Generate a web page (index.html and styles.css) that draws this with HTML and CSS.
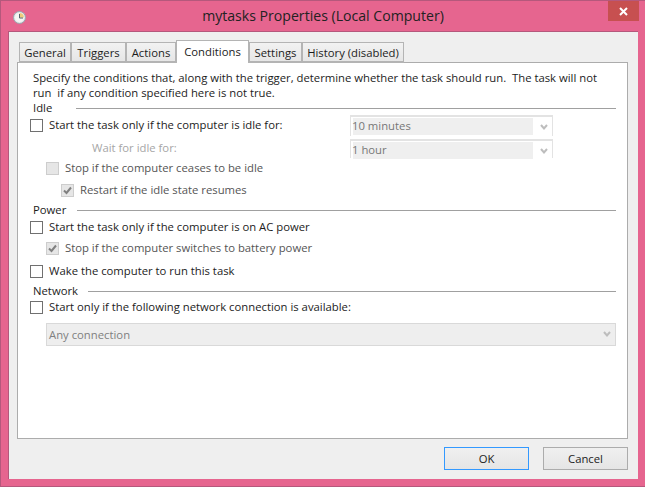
FILE: index.html
```html
<!DOCTYPE html>
<html lang="en">
<head>
<meta charset="utf-8">
<title>mytasks Properties (Local Computer)</title>
<link rel="stylesheet" href="styles.css">
</head>
<body>
<div class="window">
  <header class="titlebar">
    <svg class="app-icon" width="13" height="13" viewBox="0 0 13 13"><circle cx="6.5" cy="6.5" r="6" fill="#e4e8ea" stroke="#9aa5ad"/><circle cx="6.5" cy="6.5" r="4.5" fill="#f6f6f4"/><path d="M6.5 6.5V2A4.5 4.5 0 0 1 11 6.5Z" fill="#efcb7c"/><path d="M6.5 3V7H10" fill="none" stroke="#56626c"/></svg>
    <h1 class="title">mytasks Properties (Local Computer)</h1>
    <div class="close"><svg width="9" height="9" viewBox="0 0 9 9"><path d="M1 1L8 8M8 1L1 8" stroke="#fff" stroke-width="2"/></svg></div>
  </header>
  <div class="client">
    <nav class="tabs">
      <div class="tab t-general">General</div>
      <div class="tab t-triggers">Triggers</div>
      <div class="tab t-actions">Actions</div>
      <div class="tab active">Conditions</div>
      <div class="tab t-settings">Settings</div>
      <div class="tab t-history">History (disabled)</div>
    </nav>
    <section class="panel">
      <p class="intro">Specify the conditions that, along with the trigger, determine whether the task should run.&nbsp; The task will not<br>run&nbsp; if any condition specified here is not true.</p>
      <div class="heading h-idle"><span>Idle</span><i></i></div>
      <div class="row split short">
        <div class="opt"><b class="box"></b><span>Start the task only if the computer is idle for:</span></div>
        <div class="combo first"><span>10 minutes</span><svg width="8" height="7" viewBox="0 0 8 7"><path d="M1 1L4 4.5L7 1" fill="none" stroke="#bdbdbd" stroke-width="2"/></svg></div>
      </div>
      <div class="row split wait-row">
        <div class="opt muted wait"><span>Wait for idle for:</span></div>
        <div class="combo"><span>1 hour</span><svg width="8" height="7" viewBox="0 0 8 7"><path d="M1 1L4 4.5L7 1" fill="none" stroke="#bdbdbd" stroke-width="2"/></svg></div>
      </div>
      <div class="row"><div class="opt l1 dim"><b class="box off"></b><span>Stop if the computer ceases to be idle</span></div></div>
      <div class="row gap1"><div class="opt l2 dim"><b class="box off"><svg width="11" height="11" viewBox="0 0 11 11"><path d="M2 5.5L4.5 8L9 2.5" fill="none" stroke="#808080" stroke-width="2"/></svg></b><span>Restart if the idle state resumes</span></div></div>
      <div class="heading h-power gap1"><span>Power</span><i></i></div>
      <div class="row short"><div class="opt"><b class="box"></b><span>Start the task only if the computer is on AC power</span></div></div>
      <div class="row gap2"><div class="opt l1 dim"><b class="box off"><svg width="11" height="11" viewBox="0 0 11 11"><path d="M2 5.5L4.5 8L9 2.5" fill="none" stroke="#808080" stroke-width="2"/></svg></b><span>Stop if the computer switches to battery power</span></div></div>
      <div class="row gap2"><div class="opt"><b class="box"></b><span>Wake the computer to run this task</span></div></div>
      <div class="heading h-network gap1"><span>Network</span><i></i></div>
      <div class="row short pull"><div class="opt"><b class="box"></b><span>Start only if the following network connection is available:</span></div></div>
      <div class="select"><span>Any connection</span><svg width="8" height="7" viewBox="0 0 8 7"><path d="M1 1L4 4.5L7 1" fill="none" stroke="#bdbdbd" stroke-width="2"/></svg></div>
    </section>
    <footer class="actions">
      <button class="btn default">OK</button>
      <button class="btn">Cancel</button>
    </footer>
  </div>
</div>
</body>
</html>
```
FILE: styles.css
```css
* { box-sizing: border-box; }
html, body { margin: 0; padding: 0; background: #fff; }
body { width: 645px; height: 488px; overflow: hidden; font-family: "Open Sans", "Noto Sans", sans-serif; font-size: 11.3px; color: #1c1c1c; }
.window { height: 487px; background: #e6658f; border: 1px solid #b5587c; border-right: 0; padding: 0 7px; display: flex; flex-direction: column; }
.titlebar { height: 30px; padding-bottom: 2px; display: flex; align-items: center; justify-content: center; position: relative; flex: none; }
.app-icon { position: absolute; left: 5px; top: 10px; }
.title { margin: 0; font-size: 14.1px; font-weight: 400; color: #222; }
.close { position: absolute; right: -1px; top: 0; width: 31px; height: 20px; background: #c75050; display: flex; align-items: center; justify-content: center; }
.client { width: 630px; height: 448px; flex: none; background: #efefef; border: 1px solid #b5587c; border-width: 1px 0 0 1px; padding: 8px 10px 0 8px; display: flex; flex-direction: column; }
.tabs { display: flex; align-items: flex-end; padding-left: 2px; height: 23px; position: relative; z-index: 1; flex: none; }
.tab { height: 21px; border: 1px solid #b4b4b4; border-bottom-width: 2px; background: linear-gradient(#f2f2f2, #e6e6e6); display: flex; align-items: center; justify-content: center; }
.t-general { width: 52px; }
.t-triggers { width: 55px; }
.t-actions { width: 50px; }
.active { width: 73px; height: 23px; background: #fff; border-bottom: 0; padding-bottom: 2px; }
.t-settings { width: 53px; }
.t-history { width: 102px; }
.panel { height: 377px; flex: none; margin-top: -1px; background: #fff; border: 1px solid #acacac; padding: 7px 11px 0 15px; }
.intro { margin: 0; line-height: 15px; height: 30px; }
.heading { height: 17px; display: flex; align-items: flex-start; line-height: 15px; }
.heading i { flex: 1; height: 1px; background: #a0a0a0; margin-top: 8px; }
.h-idle i { margin-left: 24px; }
.h-power i { margin-left: 11px; }
.h-network i { margin-left: 10px; }
.row { height: 21px; display: flex; align-items: center; }
.short { height: 17px; }
.wait-row { height: 19px; margin-top: 5px; }
.gap1 { margin-top: 1px; }
.gap2 { margin-top: 2px; }
.pull { margin-top: -1px; }
.split { justify-content: space-between; padding-right: 63px; }
.opt { display: flex; align-items: center; }
.opt span { padding-bottom: 2px; }
.box { width: 13px; height: 13px; border: 1px solid #707070; background: #fff; margin: 0 6px 0 -3px; display: flex; align-items: center; justify-content: center; flex: none; }
.box.off { border-color: #cdcdcd; background: #e6e6e6; }
.l1 { margin-left: 16px; }
.l2 { margin-left: 31px; }
.dim { color: #555; }
.muted { color: #a6a6a6; }
.wait { margin-left: 59px; }
.combo { width: 203px; height: 19px; flex: none; border: 1px solid #e3e3e3; border-top-width: 2px; border-bottom: 0; background: #fff; display: flex; align-items: flex-start; padding: 1px 4px 0 2px; justify-content: space-between; color: #777; }
.combo.first { height: 21px; }
.combo span { width: 180px; height: 17px; background: #efefef; line-height: 15px; text-indent: -1px; }
.combo svg { margin-top: 6px; }
.select { width: 570px; height: 23px; margin: 7px 0 0 13px; border: 1px solid #d9d9d9; background: #eee; color: #808080; display: flex; align-items: center; justify-content: space-between; padding: 0 4px 0 2px; }
.actions { display: flex; justify-content: flex-end; gap: 14px; margin-top: 8px; flex: none; }
.btn { width: 85px; height: 23px; border: 1px solid #acacac; background: linear-gradient(#f0f0f0, #e5e5e5); font: inherit; color: #222; padding: 0 0 1px; }
.btn.default { border-color: #3399ff; }
```
